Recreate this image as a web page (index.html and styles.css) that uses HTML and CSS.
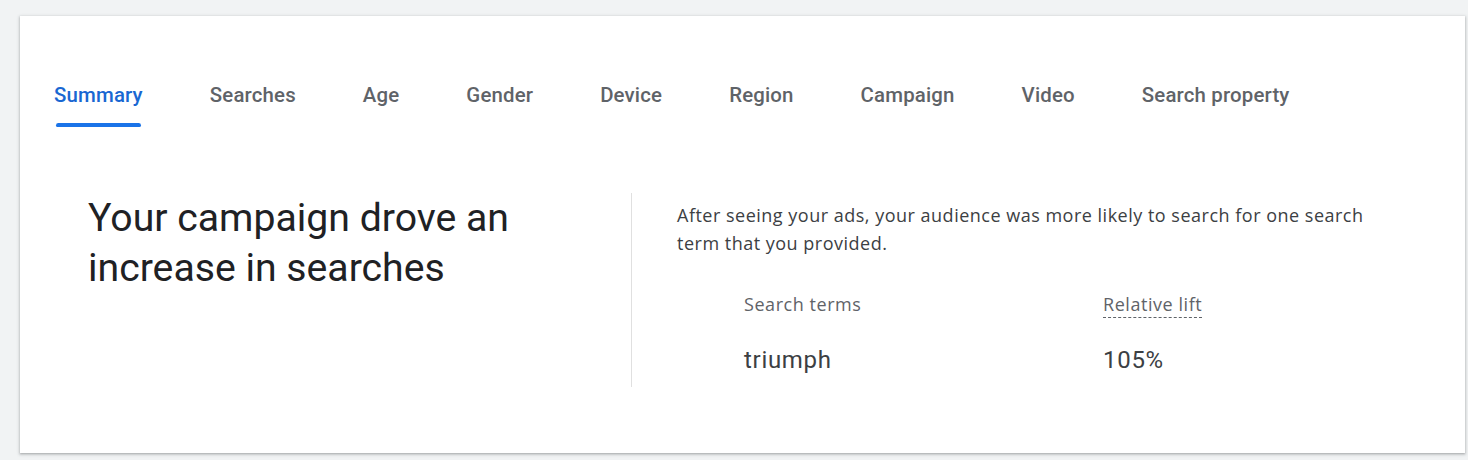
FILE: index.html
```html
<!DOCTYPE html>
<html lang="en">
<head>
<meta charset="utf-8">
<title>Search lift summary</title>
<link rel="stylesheet" href="styles.css">
</head>
<body>
<div class="card">
  <nav class="tabs">
    <div class="tab active"><span class="tab-label">Summary</span><span class="ink"></span></div>
    <div class="tab"><span class="tab-label">Searches</span></div>
    <div class="tab"><span class="tab-label">Age</span></div>
    <div class="tab"><span class="tab-label">Gender</span></div>
    <div class="tab"><span class="tab-label">Device</span></div>
    <div class="tab"><span class="tab-label">Region</span></div>
    <div class="tab"><span class="tab-label">Campaign</span></div>
    <div class="tab"><span class="tab-label">Video</span></div>
    <div class="tab"><span class="tab-label">Search property</span></div>
  </nav>
  <section class="content">
    <div class="headline-col">
      <h1 class="headline">Your campaign drove an increase in searches</h1>
    </div>
    <div class="detail-col">
      <p class="desc">After seeing your ads, your audience was more likely to search for one search term that you provided.</p>
      <div class="table">
        <div class="row head">
          <div class="cell c1">Search terms</div>
          <div class="cell c2"><span class="dotted">Relative lift</span></div>
        </div>
        <div class="row body">
          <div class="cell c1">triumph</div>
          <div class="cell c2">105%</div>
        </div>
      </div>
    </div>
  </section>
</div>
</body>
</html>
```

FILE: styles.css
```css
html, body {
  margin: 0;
  padding: 0;
}
body {
  background: #f1f3f4;
  font-family: Roboto, "Liberation Sans", Arial, sans-serif;
  width: 1468px;
  height: 460px;
  overflow: hidden;
}
.card {
  margin: 16px 3px 0 20px;
  height: 437px;
  background: #ffffff;
  box-shadow: 0 1px 2px rgba(60, 64, 67, 0.3), 0 1px 3px 1px rgba(60, 64, 67, 0.15);
  box-sizing: border-box;
  padding-top: 67px;
}
.tabs {
  display: flex;
  gap: 67px;
  padding-left: 34px;
}
.tab {
  display: flex;
  flex-direction: column;
  align-items: stretch;
}
.tab-label {
  font-size: 20.4px;
  line-height: 24px;
  color: #5f6368;
  font-weight: 500;
  letter-spacing: 0.17px;
  white-space: nowrap;
}
.tab.active .tab-label {
  color: #1967d2;
}
.ink {
  display: block;
  height: 4px;
  margin: 16px 2px 0 2px;
  background: #1a73e8;
  border-radius: 3px 3px 2px 2px;
}
.content {
  display: flex;
  margin-top: 66px;
}
.headline-col {
  width: 612px;
  box-sizing: border-box;
  padding-left: 68px;
  padding-right: 40px;
  border-right: 1px solid #e0e0e0;
  height: 194px;
}
.headline {
  margin: 0;
  font-size: 39.2px;
  line-height: 50px;
  font-weight: 400;
  color: #202124;
}
.detail-col {
  padding-left: 45px;
  padding-top: 8px;
  width: 710px;
}
.desc {
  margin: 0;
  font-family: "Open Sans", Roboto, sans-serif;
  font-size: 18px;
  line-height: 28px;
  color: #3c4043;
  letter-spacing: 0.5px;
}
.table {
  margin-top: 35px;
  padding-left: 67px;
}
.row {
  display: flex;
}
.c1 {
  width: 359px;
}
.row.head .cell {
  font-family: "Open Sans", Roboto, sans-serif;
  font-size: 18px;
  line-height: 24px;
  color: #5f6368;
  letter-spacing: 0.55px;
}
.dotted {
  border-bottom: 1px dashed #5f6368;
  padding-bottom: 1px;
}
.row.body {
  margin-top: 28px;
}
.row.body .cell {
  font-size: 24px;
  line-height: 32px;
  color: #3c4043;
  letter-spacing: 0.7px;
}
```
